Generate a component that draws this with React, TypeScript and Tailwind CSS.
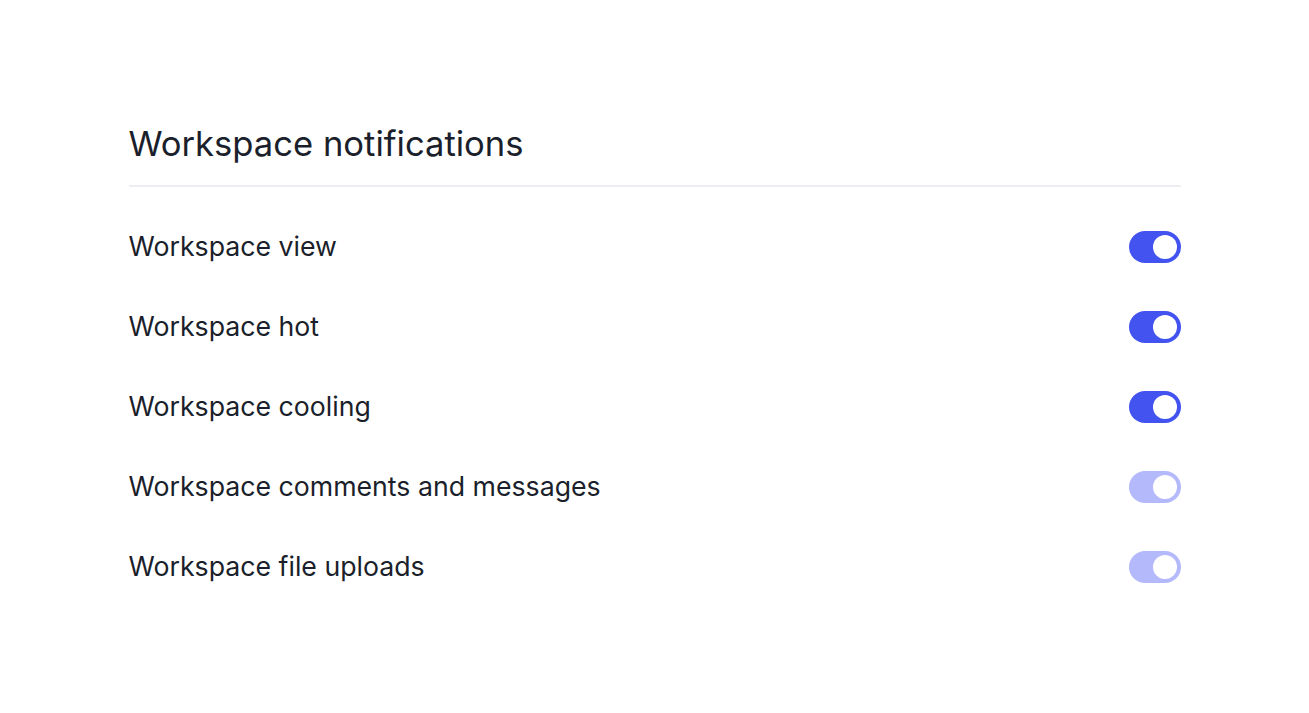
import React from "react";

const rows = [
  { label: "Workspace view", dim: false },
  { label: "Workspace hot", dim: false },
  { label: "Workspace cooling", dim: false },
  { label: "Workspace comments and messages", dim: true },
  { label: "Workspace file uploads", dim: true },
];

function Toggle({ dim }: { dim: boolean }) {
  return (
    <div
      className={
        "flex h-[32px] w-[52px] shrink-0 items-center justify-end rounded-full px-[4px] " +
        (dim ? "bg-[#b3b9fa]" : "bg-[#4353f0]")
      }
    >
      <div className="h-[24px] w-[24px] rounded-full bg-white" />
    </div>
  );
}

export default function App() {
  return (
    <div
      className="min-h-screen bg-white text-[#1b1f2b]"
      style={{ fontFamily: "Inter, 'Noto Sans', sans-serif" }}
    >
      <div className="mx-auto w-[1052px] pt-[119px]">
        <h1 className="pb-[18px] text-[34.6px] leading-[48px]">
          Workspace notifications
        </h1>
        <div className="h-[2px] bg-[#eceef2]" />
        <div className="flex flex-col pt-[20px]">
          {rows.map((r) => (
            <div key={r.label} className="flex h-[80px] items-center justify-between">
              <span className="pb-[3px] text-[26.7px] leading-[38px]">{r.label}</span>
              <Toggle dim={r.dim} />
            </div>
          ))}
        </div>
      </div>
    </div>
  );
}
